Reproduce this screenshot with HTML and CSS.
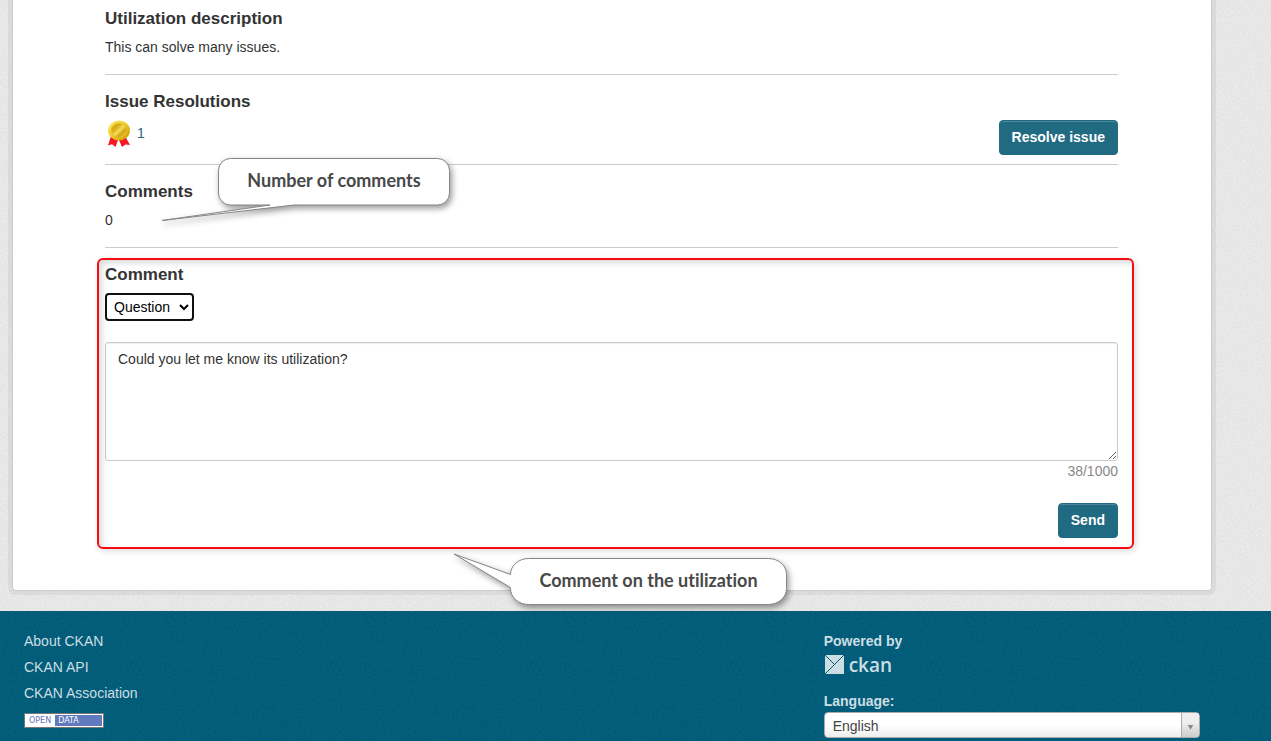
FILE: index.html
```
<!DOCTYPE html>
<html lang="en">
<head>
<meta charset="utf-8">
<meta name="viewport" content="width=device-width, initial-scale=1">
<title>Utilization comments - CKAN</title>
<link rel="stylesheet" href="styles.css">
</head>
<body>
<svg class="texture" aria-hidden="true">
  <filter id="grain"><feTurbulence type="fractalNoise" baseFrequency="0.6" numOctaves="2" seed="4"/><feColorMatrix values="0 0 0 0 1  0 0 0 0 1  0 0 0 0 1  1.6 0 0 0 -0.6"/></filter>
  <rect width="100%" height="100%" filter="url(#grain)"/>
</svg>
<main class="main">
  <div class="card">
    <section class="section">
      <h3>Utilization description</h3>
      <p>This can solve many issues.</p>
    </section>
    <section class="section section-tight">
      <h3>Issue Resolutions</h3>
      <div class="resolution">
        <div class="award">
          <svg class="medal" viewBox="0 0 28 28" aria-label="Resolved">
            <defs>
              <linearGradient id="gold" x1="0" y1="0" x2="1" y2="1"><stop offset="0" stop-color="#fff27a"/><stop offset=".5" stop-color="#f0c91c"/><stop offset="1" stop-color="#c79600"/></linearGradient>
              <linearGradient id="disc" x1="0" y1="0" x2="1" y2="1"><stop offset="0" stop-color="#c79a10"/><stop offset=".35" stop-color="#dfb41c"/><stop offset=".5" stop-color="#f3de62"/><stop offset=".68" stop-color="#d5a514"/><stop offset="1" stop-color="#f4da48"/></linearGradient>
            </defs>
            <path d="M6 16 3 25.500l4-1.300L10.500 27 13 20zM20 16l5 9-4.500-.5L17 27l-3.500-8z" fill="#f51827"/>
            <ellipse cx="14" cy="10.500" rx="11" ry="10" fill="url(#gold)"/>
            <ellipse cx="14" cy="10.500" rx="7.800" ry="7.200" fill="url(#disc)" stroke="#e2bd30" stroke-width=".8"/>
          </svg>
          <span>1</span>
        </div>
        <button class="btn" type="button">Resolve issue</button>
      </div>
    </section>
    <section class="section">
      <h3>Comments</h3>
      <p>0</p>
    </section>
    <form class="comment-form">
      <h3><label for="comment">Comment</label></h3>
      <select class="category" aria-label="Category">
        <option>Question</option>
      </select>
      <textarea id="comment" class="comment-text">Could you let me know its utilization?</textarea>
      <div class="counter">38/1000</div>
      <button class="btn send" type="button">Send</button>
      <div class="highlight"></div>
    </form>
  </div>
  <div class="callout callout-count">
    <svg class="bubble" viewBox="0 0 300 80" aria-hidden="true">
      <path d="M69.500 8.500H276.500a12 12 0 0 1 12 12V43a12 12 0 0 1-12 12H133L1 70.500 109 55H69.500a12 12 0 0 1-12-12V20.500a12 12 0 0 1 12-12Z"/>
    </svg>
    <span>Number of comments</span>
  </div>
  <div class="callout callout-form">
    <svg class="bubble" viewBox="0 0 350 70" aria-hidden="true">
      <path d="M78.500 8.500H318.500a18 16 0 0 1 18 16V38.500a18 16 0 0 1-18 16H78.500a18 16 0 0 1-18-16V37.500L4 4 60.500 24.500a18 16 0 0 1 18-16Z"/>
    </svg>
    <span>Comment on the utilization</span>
  </div>
</main>
<footer class="footer">
  <div class="footer-inner">
    <nav class="links">
      <a href="#">About CKAN</a>
      <a href="#">CKAN API</a>
      <a href="#">CKAN Association</a>
      <a class="open-data" href="#"><span>OPEN</span><span class="data">DATA</span></a>
    </nav>
    <div class="attribution">
      <strong>Powered by</strong>
      <a class="logo" href="#">
        <svg viewBox="0 0 19 19" aria-hidden="true"><path class="sheet" d="M0 0H19V19H0z"/><path class="fold" d="M0 0 9.500 9.500M19 0 0 19"/></svg>
        <span>ckan</span>
      </a>
      <label for="language">Language:</label>
      <div class="language">
        <select id="language"><option>English</option></select>
        <svg class="arrow" viewBox="0 0 18 24" aria-hidden="true"><path d="M6 12h6l-3 5z"/></svg>
      </div>
    </div>
  </div>
</footer>
</body>
</html>
```
FILE: styles.css
```
* { box-sizing: border-box; }

body {
  margin: 0;
  min-height: 100vh;
  display: flex;
  flex-direction: column;
  background: #e4e4e4;
  color: #333;
  font: 14px/20px "Liberation Sans", Arial, sans-serif;
}

h3, p { margin: 0; }
h3 { margin-bottom: 8px; font-size: 17px; line-height: 20px; }
a { color: inherit; text-decoration: none; }

.texture {
  position: absolute;
  inset: 0;
  width: 100%;
  height: 100%;
  opacity: .5;
}

.main {
  position: relative;
  padding: 0 59px 20px 12px;
}

.card {
  padding: 9px 93px 52px 92px;
  background: #fff;
  border: 1px solid #ccc;
  border-top: 0;
  border-radius: 0 0 4px 4px;
  box-shadow: 0 0 0 4px rgba(0, 0, 0, .05);
}

.section {
  margin-bottom: 17px;
  padding-bottom: 17px;
  border-bottom: 1px solid #ccc;
}
.section-tight { padding-bottom: 9px; }

.resolution {
  display: flex;
  justify-content: space-between;
  align-items: flex-start;
}
.award { display: flex; gap: 4px; color: #2d6577; line-height: 26px; }
.medal { width: 28px; height: 28px; }

.btn {
  height: 35px;
  padding: 0 12px 2px;
  border: 1px solid #206b82;
  border-radius: 4px;
  background: #206b82;
  box-shadow: inset 0 1px 0 rgba(255, 255, 255, .2);
  color: #fff;
  font: bold 14px/20px "Liberation Sans", Arial, sans-serif;
}

.comment-form {
  position: relative;
  display: flex;
  flex-direction: column;
}
.category {
  align-self: flex-start;
  width: 89px;
  height: 28px;
  padding: 0 3px;
  border: 2px solid #101010;
  border-radius: 4px;
  background: #fff;
  color: #000;
  font: 14px/20px "Liberation Sans", Arial, sans-serif;
}
.comment-text {
  height: 119px;
  margin-top: 21px;
  padding: 6px 12px;
  border: 1px solid #ccc;
  border-radius: 3px;
  box-shadow: inset 0 1px 1px rgba(0, 0, 0, .08);
  color: #333;
  font: 14px/20px "Liberation Sans", Arial, sans-serif;
  resize: vertical;
}
.counter { text-align: right; color: #888; }
.send { align-self: flex-end; margin-top: 22px; }

.highlight {
  position: absolute;
  inset: -7px -16px -11px -8px;
  border: 2px solid #f80c12;
  border-radius: 6px;
  box-shadow: 2px 2px 6px rgba(0, 0, 0, .15), inset 3px 3px 6px rgba(0, 0, 0, .15);
  pointer-events: none;
}

.callout {
  position: absolute;
  z-index: 1;
  color: #484848;
  font: bold 18px/24px Lato, sans-serif;
  font-variant-ligatures: none;
  text-align: center;
  white-space: nowrap;
}
.bubble {
  position: absolute;
  inset: 0;
  width: 100%;
  height: 100%;
  overflow: visible;
  filter: drop-shadow(2px 3px 3px rgba(0, 0, 0, .4));
}
.bubble path { fill: #fff; stroke: #858585; }
.callout span { position: relative; }
.callout-count { top: 150px; left: 161px; width: 300px; height: 80px; padding: 18px 11px 0 57px; }
.callout-form { top: 550px; left: 450px; width: 350px; height: 70px; padding: 18px 13px 0 60px; }

.footer {
  position: relative;
  flex: 1;
  padding: 20px 71px 3px 24px;
  background: #005b78;
  color: #ccdee3;
}
.footer::before {
  content: "";
  position: absolute;
  inset: 0;
  background: url("data:image/svg+xml,%3Csvg xmlns='http://www.w3.org/2000/svg' width='200' height='200'%3E%3Cfilter id='n'%3E%3CfeTurbulence type='fractalNoise' baseFrequency='.6' numOctaves='2' stitchTiles='stitch'/%3E%3CfeColorMatrix values='0 0 0 0 1 0 0 0 0 1 0 0 0 0 1 1 0 0 0 -.4'/%3E%3C/filter%3E%3Crect width='200' height='200' filter='url(%23n)'/%3E%3C/svg%3E");
  opacity: .1;
}
.footer-inner {
  position: relative;
  display: flex;
  justify-content: space-between;
}
.links { display: flex; flex-direction: column; align-items: flex-start; gap: 6px; }
.open-data {
  display: flex;
  width: 80px;
  height: 15px;
  margin-top: 4px;
  padding: 1px;
  border: 1px solid #777;
  background: #fff;
  color: #5f75b5;
  font: 8px/11px "DejaVu Sans", sans-serif;
}
.open-data span { padding-left: 3px; }
.open-data .data { flex: 1; margin-left: 4px; background: #6179bd; color: #fff; }

.attribution { display: flex; flex-direction: column; width: 32%; }
.attribution label { margin-top: 13px; font-weight: bold; }
.logo { display: flex; align-items: center; gap: 5px; height: 27px; padding-left: 1px; font: 600 19px/24px "Open Sans", sans-serif; }
.logo svg { width: 19px; height: 19px; }
.sheet { fill: #ccdee3; }
.fold { fill: none; stroke: #005d7a; }

.language { position: relative; margin-top: 1px; }
.language select {
  display: block;
  width: 100%;
  height: 26px;
  padding: 2px 8px 0;
  appearance: none;
  border: 1px solid #aaa;
  border-radius: 4px;
  background: linear-gradient(#fff 50%, #eee);
  color: #444;
  font: 14px/20px "Liberation Sans", Arial, sans-serif;
}
.arrow {
  position: absolute;
  top: 1px;
  right: 1px;
  width: 18px;
  height: 24px;
  border-left: 1px solid #aaa;
  border-radius: 0 3px 3px 0;
  background: linear-gradient(#eee 40%, #ccc);
  fill: #888;
  pointer-events: none;
}
```
